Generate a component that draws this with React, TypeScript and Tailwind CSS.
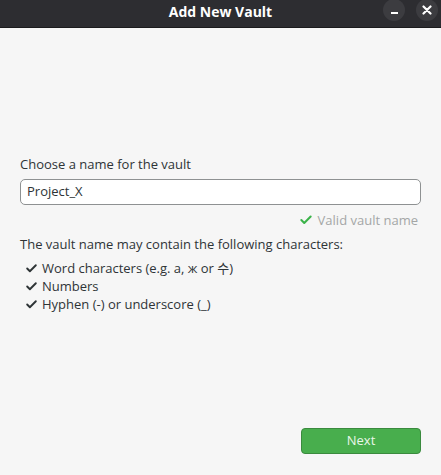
import { Check } from "lucide-react";

export default function App() {
  const rules = [
    "Word characters (e.g. a, ж or 수)",
    "Numbers",
    "Hyphen (-) or underscore (_)",
  ];

  return (
    <div
      className="w-[441px] h-[475px] flex flex-col bg-[#f6f6f6] text-[#2e3436]"
      style={{ fontFamily: '"Open Sans", "Noto Sans CJK KR", sans-serif' }}
    >
      {/* title bar */}
      <div className="relative h-[28px] shrink-0 bg-[#2d2d31] border-b border-[#1b1b1d] flex items-center justify-center">
        <span className="text-white font-bold text-[14px] -mt-[4px]">Add New Vault</span>
        <div className="absolute right-[3px] top-[-1px] flex gap-[11px]">
          <div className="w-[22px] h-[22px] rounded-full bg-[#3c3c40] flex items-center justify-center">
            <div className="w-[7px] h-[2px] bg-white mt-[5px]" />
          </div>
          <div className="w-[22px] h-[22px] rounded-full bg-[#3c3c40] flex items-center justify-center">
            <svg width="10" height="10" viewBox="0 0 10 10">
              <path d="M1.5 1.5 L8.5 8.5 M8.5 1.5 L1.5 8.5" stroke="white" strokeWidth="2.2" strokeLinecap="round" />
            </svg>
          </div>
        </div>
      </div>

      {/* body */}
      <div className="flex-1 flex flex-col px-[20px] pt-[127px] pb-[21px]">
        <label className="text-[13px] leading-[18px]">Choose a name for the vault</label>
        <div className="mt-[6px] h-[26px] rounded-[5px] border border-[#8e9192] bg-white flex items-center px-[6px] text-[13px]">
          Project_X
        </div>
        <div className="mt-[6px] pr-[3px] flex items-center justify-end gap-[5px] text-[13px] leading-[18px] text-[#a4a6a6]">
          <Check className="w-[14px] h-[14px] text-[#3bb34a]" strokeWidth={3.5} />
          Valid vault name
        </div>
        <p className="mt-[6px] text-[13px] leading-[18px]">
          The vault name may contain the following characters:
        </p>
        <ul className="mt-[6px] pl-[5px]">
          {rules.map((r) => (
            <li key={r} className="flex items-center gap-[4px] text-[13px] leading-[18px]">
              <Check className="w-[13px] h-[13px] text-[#2e3436]" strokeWidth={3.5} />
              {r}
            </li>
          ))}
        </ul>
        <div className="mt-auto flex justify-end">
          <button className="w-[120px] h-[26px] rounded-[4px] bg-[#48ae4d] border border-[#3a8a3e] text-[#eaf6ea] text-[13px]">
            Next
          </button>
        </div>
      </div>
    </div>
  );
}
